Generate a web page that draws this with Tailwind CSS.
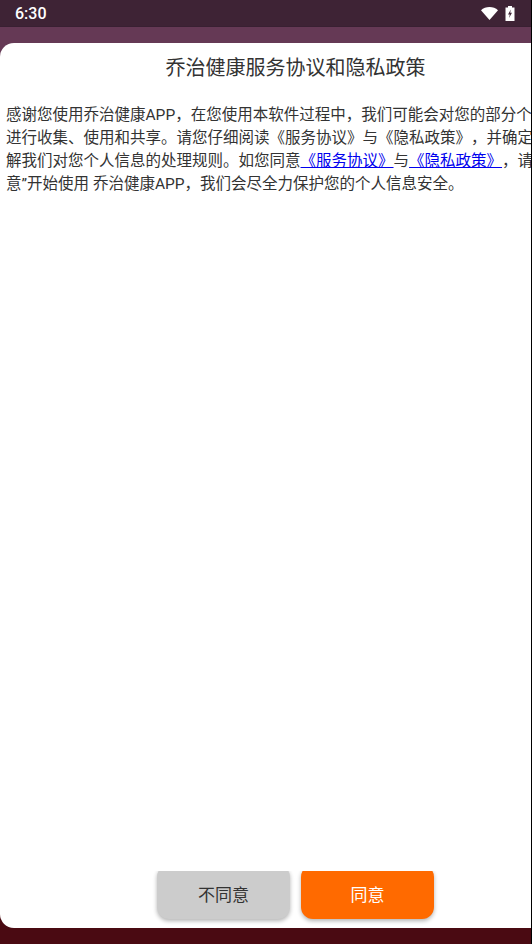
<!DOCTYPE html>
<html lang="zh-CN">
<head>
    <meta charset="UTF-8">
    <title>乔治健康</title>
    <script src="https://cdn.jsdelivr.net/npm/@tailwindcss/browser@4"></script>
</head>
<body class="bg-black">
    <div class="flex w-[532px] h-[944px] overflow-hidden font-['Roboto','Noto_Sans_CJK_SC',sans-serif]">
        <div class="flex flex-col w-[531px] h-full overflow-hidden bg-[#4a0a12]">
            <!-- status bar -->
            <div class="flex items-center justify-between shrink-0 h-[27px] pl-[15px] pr-[16px] bg-[#3e2335] border-b border-[#392032]">
                <span class="relative top-[1px] text-white text-[16px] font-medium">6:30</span>
                <div class="flex items-center gap-[7px]">
                    <svg width="17" height="13" viewBox="0 0 17 13"><path d="M0 3.2C2.3 1.2 5.2 0 8.5 0s6.2 1.2 8.5 3.2L8.5 13z" fill="#fff"/></svg>
                    <svg width="10" height="15" viewBox="0 0 10 15"><path d="M3 0h4v1.5h2.500V15H.5V1.500H3z" fill="#fff"/><path d="M5.800 3.500 3 8.500h1.800L4 12l3-5.200H5.200z" fill="#3e2335"/></svg>
                </div>
            </div>
            <div class="shrink-0 h-[16px] bg-[#653955]"></div>
            <div class="relative h-[885px] shrink-0 bg-[#653955]">
                <div class="absolute inset-x-0 bottom-0 h-[20px] bg-[#4a0a12]"></div>
                <!-- dialog -->
                <div class="relative flex flex-col w-[591px] h-full bg-white rounded-[14px]">
                    <h1 class="mt-[10px] text-center text-[20px] leading-[30px] font-normal text-[#333]">乔治健康服务协议和隐私政策</h1>
                    <p class="flex-1 mt-[21px] pl-[6px] text-[15.5px] leading-[23px] text-[#333] [text-spacing-trim:space-all]">感谢您使用乔治健康APP，在您使用本软件过程中，我们可能会对您的部分个人信息进行收集、使用和共享。请您仔细阅读《服务协议》与《隐私政策》，并确定您已了解我们对您个人信息的处理规则。如您同意<a href="#" class="text-[#0000ee] underline">《服务协议》</a>与<a href="#" class="text-[#0000ee] underline">《隐私政策》</a>，请点击”同意”开始使用 乔治健康APP，我们会尽全力保护您的个人信息安全。</p>
                    <div class="flex justify-center gap-[11px] shrink-0 h-[57px] overflow-hidden">
                        <button class="w-[133px] h-[54px] -mt-[6px] rounded-[12px] bg-[#cccccc] text-[#333] text-[17px] shadow-[0_2px_4px_rgba(0,0,0,0.3)]"><span class="relative top-[4px]">不同意</span></button>
                        <button class="w-[133px] h-[54px] -mt-[6px] rounded-[12px] bg-[#ff6a00] text-white text-[17px] shadow-[0_2px_4px_rgba(0,0,0,0.3)]"><span class="relative top-[4px]">同意</span></button>
                    </div>
                </div>
            </div>
        </div>
    </div>
</body>
</html>
